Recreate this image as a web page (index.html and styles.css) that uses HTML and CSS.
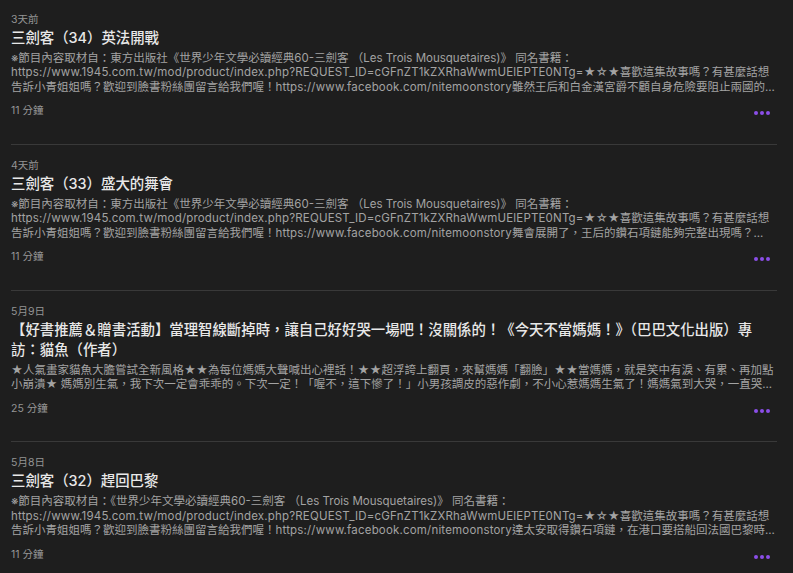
FILE: index.html
```html
<!DOCTYPE html>
<html lang="zh-Hant">
<head>
<meta charset="utf-8">
<title>Episodes</title>
<link rel="stylesheet" href="styles.css">
</head>
<body>
<main class="list">
  <article class="episode">
    <div class="date">3天前</div>
    <h2 class="title">三劍客（34）英法開戰</h2>
    <div class="desc">
      <span class="line">※節目內容取材自：東方出版社《世界少年文學必讀經典60-三劍客 （Les Trois Mousquetaires)》 同名書籍：</span>
      <span class="line"><span class="url">https://www.1945.com.tw/mod/product/index.php?REQUEST_ID=cGFnZT1kZXRhaWwmUElEPTE0NTg=</span>★☆★喜歡這集故事嗎？有甚麼話想</span>
      <span class="line">告訴小青姐姐嗎？歡迎到臉書粉絲團留言給我們喔！<span class="url">https://www.facebook.com/nitemoonstory</span>雖然王后和白金漢宮爵不顧自身危險要阻止兩國的...</span>
    </div>
    <div class="foot">
      <span class="duration">11 分鐘</span>
      <span class="more"><i></i><i></i><i></i></span>
    </div>
  </article>
  <article class="episode">
    <div class="date">4天前</div>
    <h2 class="title">三劍客（33）盛大的舞會</h2>
    <div class="desc">
      <span class="line">※節目內容取材自：東方出版社《世界少年文學必讀經典60-三劍客 （Les Trois Mousquetaires)》 同名書籍：</span>
      <span class="line"><span class="url">https://www.1945.com.tw/mod/product/index.php?REQUEST_ID=cGFnZT1kZXRhaWwmUElEPTE0NTg=</span>★☆★喜歡這集故事嗎？有甚麼話想</span>
      <span class="line">告訴小青姐姐嗎？歡迎到臉書粉絲團留言給我們喔！<span class="url">https://www.facebook.com/nitemoonstory</span>舞會展開了，王后的鑽石項鏈能夠完整出現嗎？...</span>
    </div>
    <div class="foot">
      <span class="duration">11 分鐘</span>
      <span class="more"><i></i><i></i><i></i></span>
    </div>
  </article>
  <article class="episode">
    <div class="date">5月9日</div>
    <h2 class="title">【好書推薦＆贈書活動】當理智線斷掉時，讓自己好好哭一場吧！沒關係的！《今天不當媽媽！》（巴巴文化出版）專訪：貓魚（作者）</h2>
    <div class="desc">
      <span class="line">★人氣畫家貓魚大膽嘗試全新風格★★為每位媽媽大聲喊出心裡話！★★超浮誇上翻頁，來幫媽媽「翻臉」★★當媽媽，就是笑中有淚、有累、再加點</span>
      <span class="line">小崩潰★ 媽媽別生氣，我下次一定會乖乖的。下次一定！「喔不，這下慘了！」小男孩調皮的惡作劇，不小心惹媽媽生氣了！媽媽氣到大哭，一直哭...</span>
    </div>
    <div class="foot">
      <span class="duration">25 分鐘</span>
      <span class="more"><i></i><i></i><i></i></span>
    </div>
  </article>
  <article class="episode">
    <div class="date">5月8日</div>
    <h2 class="title">三劍客（32）趕回巴黎</h2>
    <div class="desc">
      <span class="line">※節目內容取材自：《世界少年文學必讀經典60-三劍客 （Les Trois Mousquetaires)》 同名書籍：</span>
      <span class="line"><span class="url">https://www.1945.com.tw/mod/product/index.php?REQUEST_ID=cGFnZT1kZXRhaWwmUElEPTE0NTg=</span>★☆★喜歡這集故事嗎？有甚麼話想</span>
      <span class="line">告訴小青姐姐嗎？歡迎到臉書粉絲團留言給我們喔！<span class="url">https://www.facebook.com/nitemoonstory</span>達太安取得鑽石項鏈，在港口要搭船回法國巴黎時...</span>
    </div>
    <div class="foot">
      <span class="duration">11 分鐘</span>
      <span class="more"><i></i><i></i><i></i></span>
    </div>
  </article>
</main>
</body>
</html>
```

FILE: styles.css
```css
html, body {
  margin: 0;
  padding: 0;
  height: 100%;
  overflow: hidden;
  background: #1e1e1e;
}

body {
  font-family: Inter, "Noto Sans CJK TC", sans-serif;
  color: #e6e6e6;
}

.list {
  padding: 0 16px 0 11px;
}

.episode {
  padding: 14px 0 26.5px;
  border-bottom: 1px solid #393939;
}

.episode:first-child {
  padding-top: 12.5px;
}

.date {
  font-size: 10.5px;
  line-height: 13px;
  color: #949494;
}

.title {
  margin: 2px 0 0;
  padding-right: 10px;
  font-size: 14.4px;
  line-height: 20px;
  font-weight: 500;
  color: #e8e8e8;
}

.desc {
  margin-top: 3px;
  font-size: 11.5px;
  line-height: 14.5px;
  color: #a3a3a3;
}

.line {
  display: block;
  white-space: nowrap;
  overflow: hidden;
  text-overflow: ellipsis;
}

.url {
  letter-spacing: 0.18px;
}

.foot {
  margin-top: 10px;
  display: flex;
  justify-content: space-between;
  align-items: flex-start;
}

.duration {
  font-size: 10.5px;
  line-height: 13px;
  color: #959595;
}

.more {
  display: flex;
  gap: 2px;
  margin-top: 7px;
  margin-right: 7px;
}

.more i {
  display: block;
  width: 4px;
  height: 4px;
  border-radius: 50%;
  background: #8b4ee8;
}
```
